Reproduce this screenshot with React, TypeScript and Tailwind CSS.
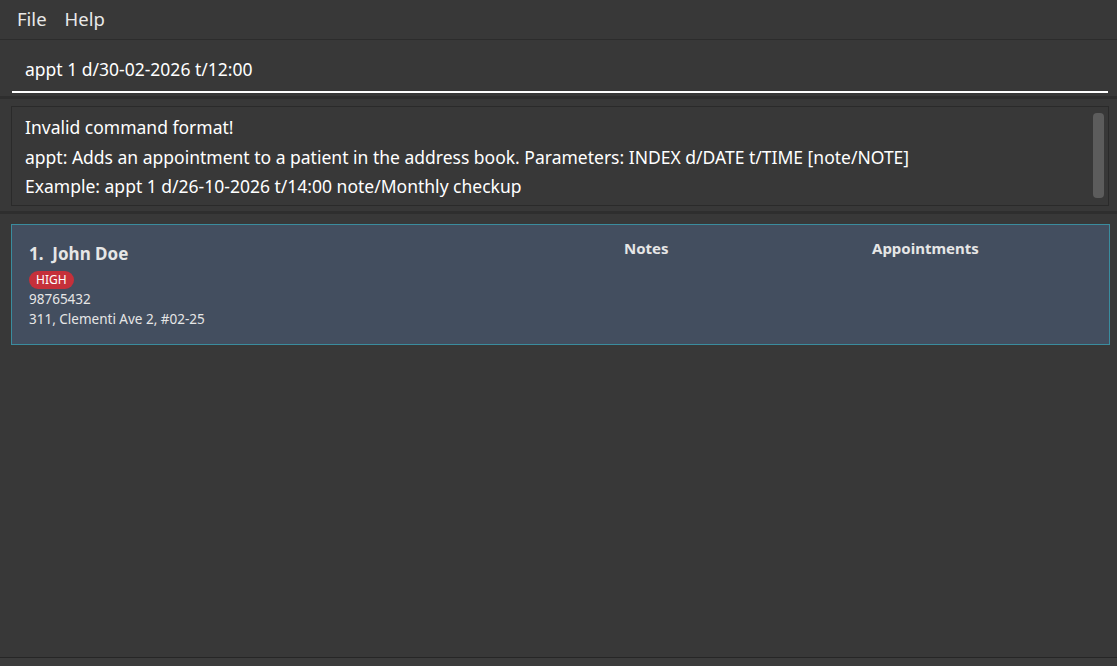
import React from "react";

export default function App() {
  const font = { fontFamily: '"Noto Sans", "Open Sans", sans-serif' };
  return (
    <div className="w-[1117px] h-[666px] bg-[#383838] flex flex-col overflow-hidden text-white" style={font}>
      {/* Menu bar */}
      <div className="h-[40px] flex items-center gap-[18px] pl-[17px] pb-[2px] border-b border-[#2c2c2c] text-[18.5px] text-[#e8e8e8]">
        <span>File</span>
        <span>Help</span>
      </div>
      {/* Command box */}
      <div className="h-[59px] pl-[12px] pr-[9px] pt-[14px] border-b-[3px] border-[#2e2e2e]">
        <div className="h-[39px] border-b-2 border-white flex items-start pl-[13px] pt-[2px] text-[17.5px] text-white">
          appt 1 d/30-02-2026 t/12:00
        </div>
      </div>
      {/* Result display */}
      <div className="h-[115px] pl-[11px] pr-[8px] pt-[7px] pb-[5px] border-b-[3px] border-[#2e2e2e]">
        <div className="h-full border border-[#2a2a2a] flex">
          <div className="flex-1 pl-[13px] pt-[6px] text-[17.5px] leading-[29.5px] text-white whitespace-nowrap">
            <div>Invalid command format!</div>
            <div>appt: Adds an appointment to a patient in the address book. Parameters: INDEX d/DATE t/TIME [note/NOTE]</div>
            <div>Example: appt 1 d/26-10-2026 t/14:00 note/Monthly checkup</div>
          </div>
          <div className="w-[15px] flex justify-start pt-[6px] pb-[7px]">
            <div className="w-[11px] h-full rounded-[4px] bg-[#5c5c5c]" />
          </div>
        </div>
      </div>
      {/* List */}
      <div className="flex-1 pl-[11px] pr-[7px] pt-[10px] border-b border-[#262626]">
        <div className="h-[121px] bg-[#434e5f] border border-[#3a8c9e] flex pl-[17px] pt-[18px]">
          <div className="w-[595px] flex flex-col text-[#e6e6e6]">
            <div className="text-[17px] font-bold leading-[22px]">1.&nbsp;&nbsp;John Doe</div>
            <div className="mt-[1px]">
              <span className="inline-block bg-[#c5303a] rounded-full px-[7px] h-[18px] leading-[18px] text-[12px] text-white">HIGH</span>
            </div>
            <div className="text-[13.5px] leading-[20px] mt-[-1px]">98765432</div>
            <div className="text-[13.5px] leading-[20px]">311, Clementi Ave 2, #02-25</div>
          </div>
          <div className="w-[248px] text-[15px] font-bold text-[#e6e6e6] mt-[-6px]">Notes</div>
          <div className="text-[15px] font-bold text-[#e6e6e6] mt-[-6px]">Appointments</div>
        </div>
      </div>
      <div className="h-[8px] bg-[#3c3c3c]" />
    </div>
  );
}
